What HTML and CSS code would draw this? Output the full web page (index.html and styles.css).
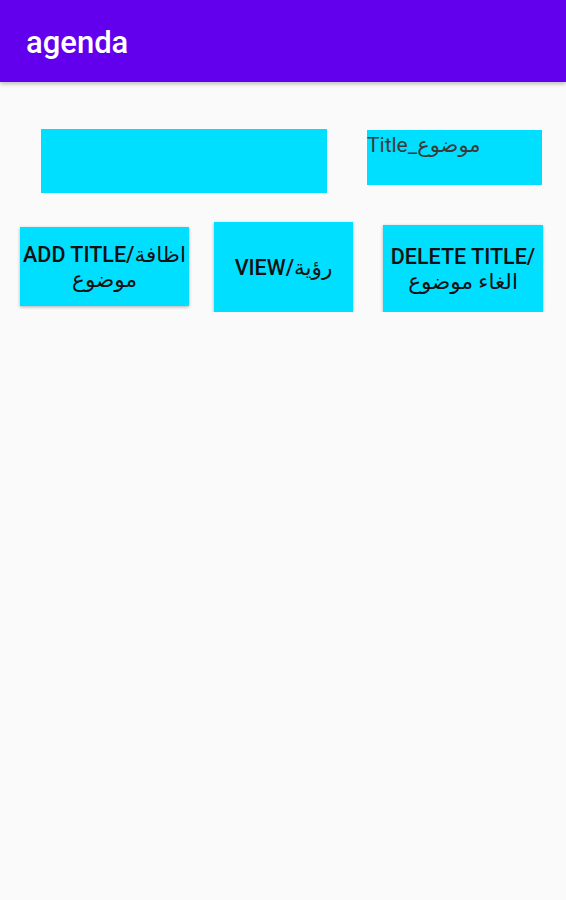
FILE: index.html
```html
<!DOCTYPE html>
<html lang="en">
<head>
<meta charset="utf-8">
<title>agenda</title>
<link rel="stylesheet" href="styles.css">
</head>
<body>
<header class="appbar"><span class="appbar-title">agenda</span></header>
<main class="content">
  <div class="row row-fields">
    <div class="field field-main"></div>
    <div class="field field-title">Title_موضوع</div>
  </div>
  <div class="row row-buttons">
    <button class="btn btn-add">ADD TITLE/اظافة<br>موضوع</button>
    <button class="btn btn-view">VIEW/رؤية</button>
    <button class="btn btn-delete">DELETE TITLE/<br>الغاء موضوع</button>
  </div>
</main>
</body>
</html>
```
FILE: styles.css
```css
html, body {
  margin: 0;
  padding: 0;
  background: #fafafa;
  font-family: Roboto, "DejaVu Sans", sans-serif;
}
.appbar {
  height: 82px;
  background: #6200ee;
  display: flex;
  align-items: center;
  padding-left: 26px;
  box-shadow: 0 2px 4px rgba(0,0,0,0.25);
  position: relative;
}
.appbar-title {
  color: #ffffff;
  font-size: 31px;
  font-weight: 500;
  margin-top: 2px;
}
.content {
  display: flex;
  flex-direction: column;
}
.row {
  display: flex;
  align-items: flex-start;
}
.row-fields {
  margin-top: 47px;
  padding-left: 41px;
}
.field {
  background: #00dfff;
}
.field-main {
  width: 286px;
  height: 64px;
}
.field-title {
  margin-left: 40px;
  margin-top: 1px;
  width: 175px;
  height: 55px;
  box-sizing: border-box;
  padding-top: 1px;
  font-size: 21px;
  line-height: 28px;
  color: #3a3a3a;
}
.row-buttons {
  margin-top: 29px;
  padding-left: 20px;
}
.btn {
  border: none;
  background: #00dfff;
  color: #111;
  font-family: Roboto, "DejaVu Sans", sans-serif;
  font-weight: 500;
  font-size: 21.5px;
  line-height: 25px;
  padding: 0;
  text-align: center;
  box-shadow: 0 1px 3px rgba(0,0,0,0.3);
}
.btn-add {
  width: 169px;
  height: 79px;
  margin-top: 5px;
}
.btn-view {
  width: 139px;
  height: 90px;
  margin-left: 25px;
}
.btn-delete {
  width: 160px;
  height: 87px;
  margin-left: 30px;
  margin-top: 3px;
}
```
